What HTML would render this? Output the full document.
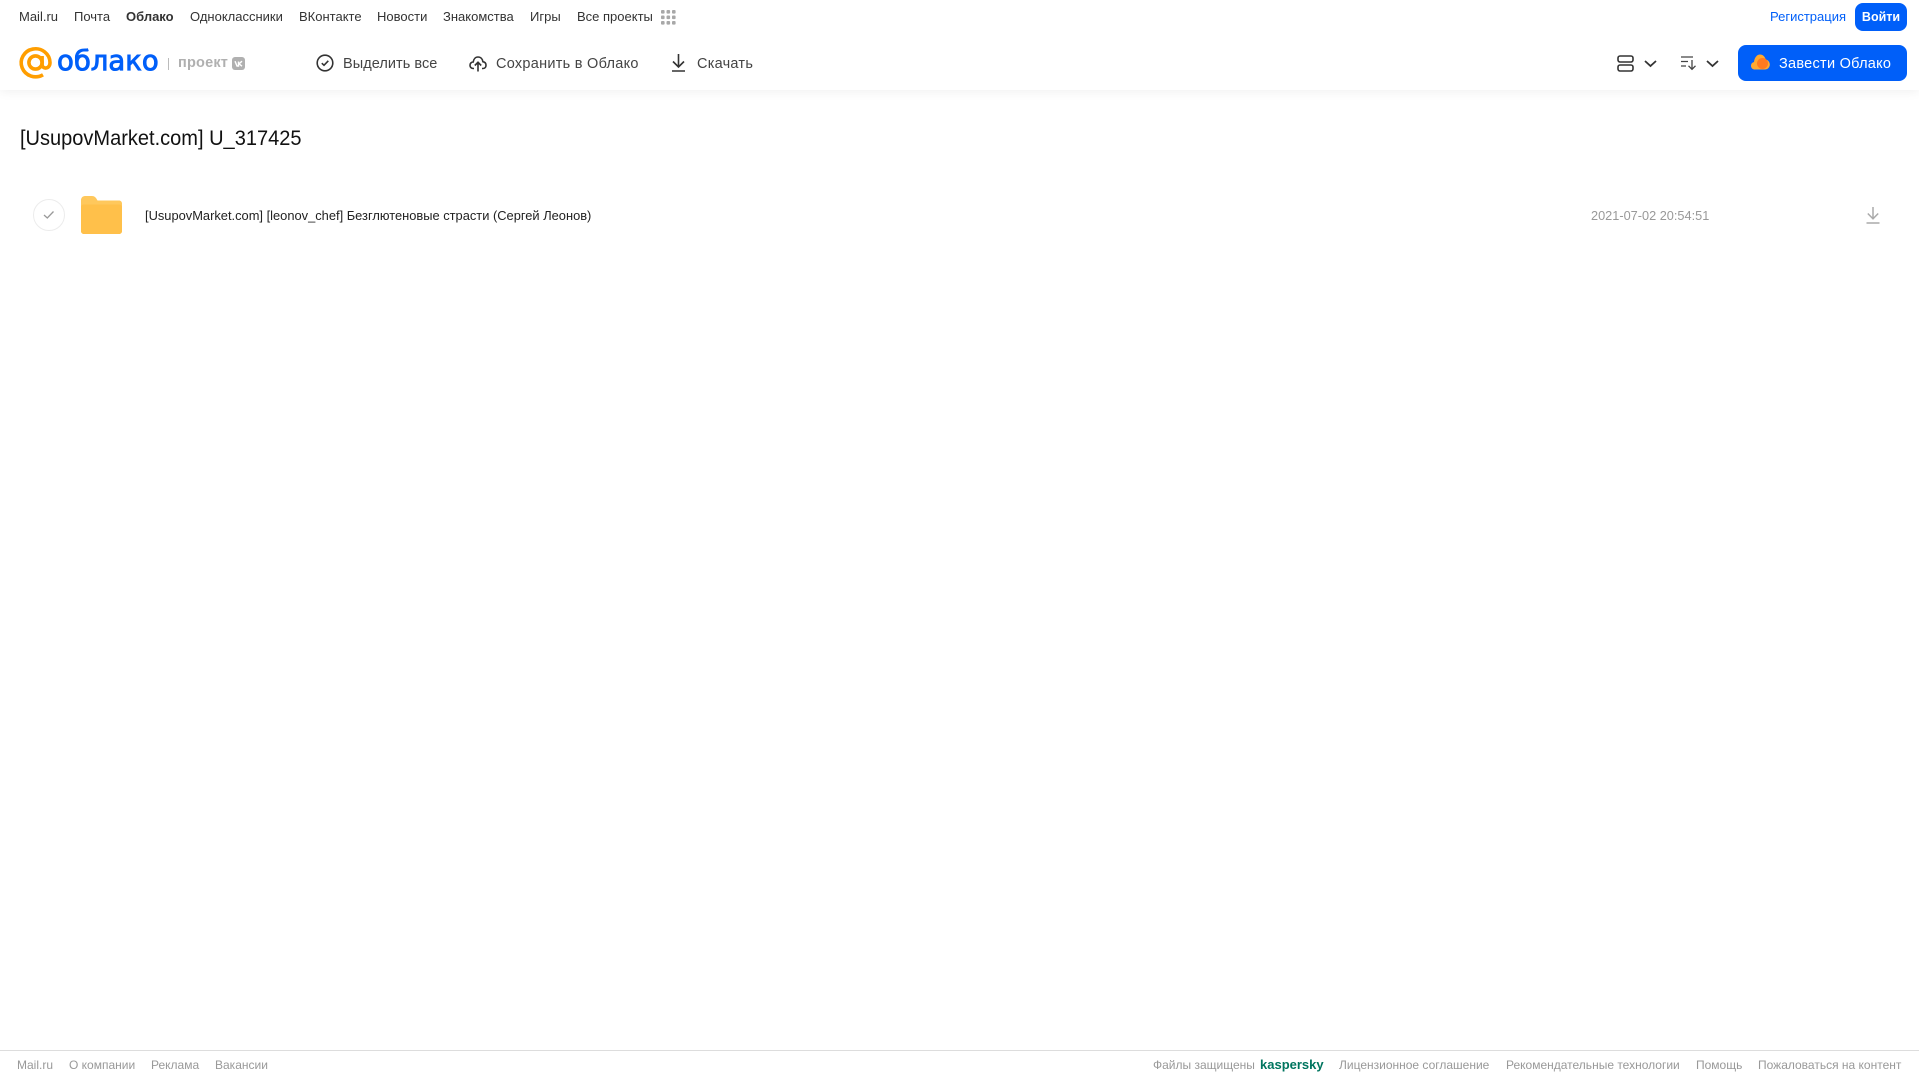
<!DOCTYPE html>
<html lang="ru"><head><meta charset="utf-8"><title>Облако</title>
<style>
html,body{margin:0;padding:0;background:#fff}
body{position:relative;width:1919px;height:1079px;overflow:hidden;font-family:"Liberation Sans",sans-serif}
.t{position:absolute;white-space:nowrap;line-height:20px;height:20px;transform-origin:left center}
.n{top:7px;font-size:13px;color:#333}
.a{top:54px;font-size:14.5px;color:#444;letter-spacing:.27px}
.f{top:1055px;font-size:12px;color:#999}
svg{position:absolute;overflow:visible}
</style></head><body>
<div style="position:absolute;left:0;top:0;width:1919px;height:90px;background:#fff;box-shadow:0 2px 10px rgba(0,0,0,.06)"></div>

<span class="t n" style="left:19px">Mail.ru</span>
<span class="t n" style="left:74px">Почта</span>
<span class="t n" style="left:126px;font-weight:bold">Облако</span>
<span class="t n" style="left:190px">Одноклассники</span>
<span class="t n" style="left:299px">ВКонтакте</span>
<span class="t n" style="left:377px">Новости</span>
<span class="t n" style="left:443px">Знакомства</span>
<span class="t n" style="left:530px">Игры</span>
<span class="t n" style="left:577px">Все проекты</span>
<svg style="left:661px;top:10px" width="15" height="15" fill="#a8a8a8"><rect x="0" y="0" width="3.6" height="3.6" rx="1"/><rect x="5.5" y="0" width="3.6" height="3.6" rx="1"/><rect x="11" y="0" width="3.6" height="3.6" rx="1"/><rect x="0" y="5.5" width="3.6" height="3.6" rx="1"/><rect x="5.5" y="5.5" width="3.6" height="3.6" rx="1"/><rect x="11" y="5.5" width="3.6" height="3.6" rx="1"/><rect x="0" y="11" width="3.6" height="3.6" rx="1"/><rect x="5.5" y="11" width="3.6" height="3.6" rx="1"/><rect x="11" y="11" width="3.6" height="3.6" rx="1"/></svg>

<span class="t n" style="left:1770px;color:#005ff9">Регистрация</span>
<div style="position:absolute;left:1855px;top:3px;width:52px;height:28px;border-radius:8px;background:#005ff9;color:#fff;font-size:12.5px;font-weight:bold;line-height:28px;text-align:center">Войти</div>

<svg style="left:19px;top:47px" width="33" height="32" viewBox="0 0 33 32" fill="none" stroke="#ff9e00" stroke-width="3.6"><circle cx="16.5" cy="15.5" r="6.6"/><path d="M23.1 9v8.500c0 5 7.900 5 7.900-2A14.400 14 0 1 0 24 27.800"/></svg>
<span class="t" style="left:57px;top:45px;height:32px;line-height:32px;font-family:'DejaVu Sans',sans-serif;font-size:27.5px;color:#005ff9;-webkit-text-stroke:.9px #005ff9">облако</span>
<div style="position:absolute;left:168px;top:58px;width:1px;height:12px;background:#bbb"></div>
<span class="t" style="left:178px;top:53px;font-size:14.5px;font-weight:bold;color:#b0b0b0;letter-spacing:.2px">проект</span>
<div style="position:absolute;left:232px;top:57px;width:13px;height:13px;border-radius:3px;background:#b0b0b0"></div>
<svg style="left:232px;top:57px" width="13" height="13" fill="none" stroke="#fff" stroke-width="1.4"><path d="M3 4.200 5 9 6.500 9V4.500M10 4.200 7 6.800 10 9.200"/></svg>

<svg style="left:316px;top:54px" width="18" height="18" fill="none" stroke="#333" stroke-width="1.6"><circle cx="9" cy="9" r="7.800"/><path d="M5.800 9.200 8 11.300 12.300 6.800"/></svg>
<span class="t a" style="left:343px;letter-spacing:.05px">Выделить все</span>
<svg style="left:469px;top:54px" width="18" height="18" fill="none" stroke="#333" stroke-width="1.6"><path d="M5 14.500H4.300C2.200 14.500 1 13 1 11.200 1 9.300 2.500 8 4.200 8 4.600 5 6.500 3 9 3 11.700 3 13.500 5 13.900 7.700 15.800 8 17 9.400 17 11.200 17 13 15.800 14.500 13.800 14.500H13M9 17.500V8.500M5.800 11.500 9 8.300 12.200 11.500"/></svg>
<span class="t a" style="left:496px">Сохранить в Облако</span>
<svg style="left:671px;top:54px" width="15" height="18" fill="none" stroke="#333" stroke-width="1.6"><path d="M7.500 0V12.500M2 7.500 7.500 13 13 7.500M1 17H14"/></svg>
<span class="t a" style="left:697px;letter-spacing:.25px">Скачать</span>

<svg style="left:1617px;top:55px" width="17" height="17" fill="none" stroke="#333" stroke-width="1.6"><rect x="1" y="1" width="15" height="6" rx="2"/><rect x="1" y="10" width="15" height="6" rx="2"/></svg>
<svg style="left:1644px;top:60px" width="13" height="8" fill="none" stroke="#333" stroke-width="1.800"><path d="M1 1 6.500 6 12 1"/></svg>
<svg style="left:1681px;top:55px" width="16" height="16" fill="none" stroke="#444" stroke-width="1.300"><path d="M0 2H12M0 6.500H7M0 11H5M11 5V14M7.500 10.800 11 14.300 14.500 10.800"/></svg>
<svg style="left:1706px;top:60px" width="13" height="8" fill="none" stroke="#333" stroke-width="1.800"><path d="M1 1 6.500 6 12 1"/></svg>

<div style="position:absolute;left:1738px;top:45px;width:169px;height:36px;border-radius:8px;background:#005ff9"></div>
<svg style="left:1751px;top:54px" width="19" height="16"><path d="M4 15.500C1.500 15.500 0 13.800 0 11.700 0 9.800 1.300 8.400 3 8 3.500 3.500 6 .5 9 .5 12 .5 14 2.800 14.700 5.500 17 6 18.800 8 18.800 10.500 18.800 13.500 16.500 15.500 14 15.500Z" fill="#ffa930"/><circle cx="11.500" cy="9.500" r="5.500" fill="#ff7a1f"/></svg>
<span class="t a" style="left:1779px;color:#fff">Завести Облако</span>

<span class="t" style="left:20px;top:124px;height:28px;line-height:28px;font-size:21.500px;color:#111;transform:scaleX(.931)">[UsupovMarket.com] U_317425</span>

<div style="position:absolute;left:33px;top:199px;width:30px;height:30px;border:1px solid #ececec;border-radius:50%"></div>
<svg style="left:43px;top:210px" width="12" height="10" fill="none" stroke="#999" stroke-width="1.300"><path d="M1 5 4.300 8 10.500 1.500"/></svg>
<svg style="left:81px;top:196px" width="41" height="38"><path d="M0 4C0 1.800 1.800 0 4 0H11C13.500 0 15 1.500 16.500 4.500H38C39.700 4.500 41 5.800 41 7.500V35C41 36.700 39.700 38 38 38H3C1.300 38 0 36.700 0 35Z" fill="#ffc85c"/><path d="M0 11C0 9.500 1.300 8.500 3 8.500H38C39.700 8.500 41 9.500 41 11V35C41 36.700 39.700 38 38 38H3C1.300 38 0 36.700 0 35Z" fill="#ffc04a"/></svg>
<span class="t" style="left:145px;top:206px;font-size:13px;color:#222;transform:scaleX(.99)">[UsupovMarket.com] [leonov_chef] Безглютеновые страсти (Сергей Леонов)</span>
<span class="t" style="left:1591px;top:206px;font-size:13px;color:#999;transform:scaleX(.98)">2021-07-02 20:54:51</span>
<svg style="left:1866px;top:207px" width="14" height="17" fill="none" stroke="#aaa" stroke-width="1.500"><path d="M7 0V11M1.800 6.500 7 11.800 12.200 6.500M.5 16H13.500"/></svg>

<div style="position:absolute;left:0;top:1050px;width:1919px;height:1px;background:#ddd"></div>
<span class="t f" style="left:17px">Mail.ru</span>
<span class="t f" style="left:69px">О компании</span>
<span class="t f" style="left:151px">Реклама</span>
<span class="t f" style="left:215px">Вакансии</span>
<span class="t f" style="left:1153px">Файлы защищены</span>
<span class="t f" style="left:1260px;font-size:13px;font-weight:bold;color:#00755f">kaspersky</span>
<span class="t f" style="left:1339px">Лицензионное соглашение</span>
<span class="t f" style="left:1506px">Рекомендательные технологии</span>
<span class="t f" style="left:1696px">Помощь</span>
<span class="t f" style="left:1758px">Пожаловаться на контент</span>
</body></html>
